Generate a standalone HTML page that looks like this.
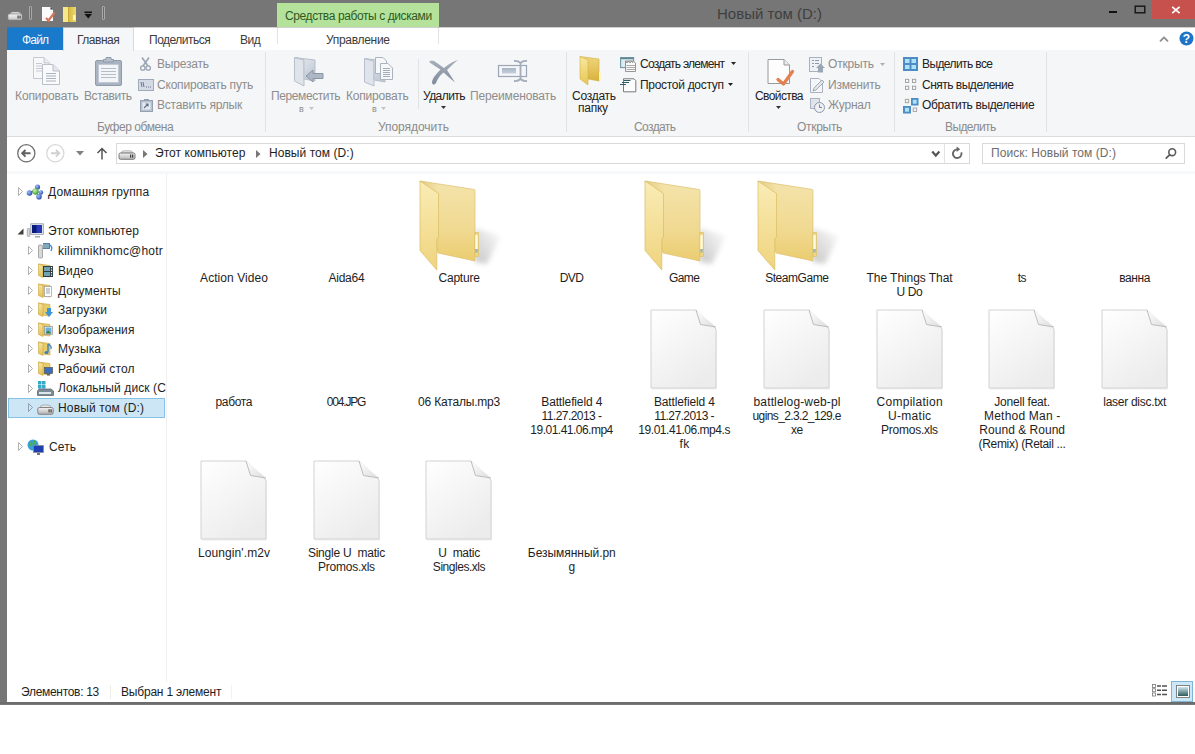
<!DOCTYPE html>
<html><head><meta charset="utf-8">
<style>
*{margin:0;padding:0;box-sizing:border-box}
html,body{width:1195px;height:754px;overflow:hidden;background:#fff}
body{position:relative;font-family:"Liberation Sans",sans-serif;font-size:12px;color:#1e1e1e}
.a{position:absolute;white-space:nowrap}
.t{position:absolute;white-space:nowrap;line-height:14px}
svg{position:absolute;overflow:visible}
#title{left:0;top:0;width:1195px;height:27px;background:#767676}
#lborder{left:0;top:0;width:7px;height:704px;background:#767676}
#bborder{left:0;top:702px;width:1195px;height:3px;background:linear-gradient(#6c6c6c 0,#6c6c6c 2px,#7a7a7a 2px)}
#tabs{left:7px;top:27px;width:1188px;height:23px;background:#fff}
#ribbon{left:7px;top:50px;width:1188px;height:87px;background:#f5f6f7;border-bottom:1px solid #dadbdc}
.sep{position:absolute;top:52px;width:1px;height:80px;background:#e2e3e4}
.lbl{color:#8b8b8b}
.dis{color:#8d8d8d}
.ct{width:120px;text-align:center;color:#1e1e1e}
.grp{position:absolute;top:120px;color:#8b8b8b;white-space:nowrap;font-size:12px;line-height:14px}
</style></head><body>
<div id="title" class="a"></div>
<div id="lborder" class="a"></div>
<div id="tabs" class="a"></div>
<div id="ribbon" class="a"></div>
<div id="bborder" class="a"></div>
<!-- title bar quick access -->
<svg style="left:7px;top:11px" width="16" height="10" viewBox="0 0 16 10">
 <defs><linearGradient id="drv" x1="0" y1="0" x2="0" y2="1"><stop offset="0" stop-color="#f6f6f6"/><stop offset="1" stop-color="#c4c4c4"/></linearGradient></defs>
 <path d="M3,3 Q3.5,1 6,1 H11 Q13.5,1 14,3 Z" fill="#e8e8e8" stroke="#9a9a9a" stroke-width="0.6"/>
 <rect x="1" y="3" width="14" height="6" rx="1" fill="url(#drv)" stroke="#8a8a8a" stroke-width="0.7"/>
 <rect x="10.5" y="4.5" width="1.2" height="3" fill="#444"/><rect x="12.5" y="4.5" width="1.2" height="3" fill="#444"/>
</svg>
<div class="a" style="left:29px;top:6px;width:3px;height:14px;border:1px solid #a9a9a9;border-radius:1px;background:#6a6a6a"></div>
<svg style="left:41px;top:6px" width="15" height="16" viewBox="0 0 15 16">
 <path d="M1,1 H9.5 L12,3.5 V15 H1 Z" fill="#fbfbfb"/>
 <path d="M9.5,1 L12,3.5 H9.5 Z" fill="#333"/>
 <path d="M5,12 L7.5,14.5 L13.5,6.5" fill="none" stroke="#d8755a" stroke-width="2.2"/>
</svg>
<svg style="left:62px;top:6px" width="15" height="16" viewBox="0 0 15 16">
 <defs><linearGradient id="qf" x1="0" y1="0" x2="1" y2="0"><stop offset="0" stop-color="#f3e27a"/><stop offset="0.5" stop-color="#d8bf45"/><stop offset="1" stop-color="#ecd870"/></linearGradient></defs>
 <rect x="1" y="1" width="13" height="15" fill="url(#qf)"/>
 <rect x="1" y="1" width="5" height="15" fill="#f6e88a"/>
 <path d="M6.5,1 V16" stroke="#c9a83a" stroke-width="1"/>
 <rect x="11" y="9" width="2.5" height="5" fill="#fff6b8"/>
</svg>
<svg style="left:84px;top:11px" width="9" height="9" viewBox="0 0 9 9">
 <rect x="0.5" y="0.5" width="7.5" height="1.6" fill="#111"/>
 <path d="M0.5,3 H8 L4.25,7.5 Z" fill="#111"/>
</svg>
<div class="a" style="left:102px;top:6px;width:3px;height:14px;border:1px solid #a9a9a9;border-radius:1px;background:#6a6a6a"></div>
<!-- contextual tab -->
<div class="a" style="left:277px;top:3px;width:162px;height:24px;background:#b5e29b"></div>
<div class="a" style="left:277px;top:27px;width:1px;height:17px;background:#e4e4e4"></div>
<div class="a" style="left:438px;top:27px;width:1px;height:17px;background:#e4e4e4"></div>
<div class="a" style="left:285px;top:9px;color:#2d5a22;font-size:12px;line-height:14px;letter-spacing:-0.4px">Средства работы с дисками</div>
<!-- window title -->
<div class="a" style="left:717px;top:5px;color:#3f3f3f;font-size:15px;line-height:17px">Новый том (D:)</div>
<!-- window controls -->
<div class="a" style="left:1109px;top:11px;width:8px;height:2px;background:#111"></div>
<svg style="left:1134px;top:5px" width="12" height="9" viewBox="0 0 12 9"><rect x="1.2" y="1.2" width="9.6" height="6.6" fill="none" stroke="#151515" stroke-width="1.4"/></svg>
<div class="a" style="left:1152px;top:0;width:43px;height:19px;background:#c7514c"></div>
<svg style="left:1171px;top:6px" width="10" height="8" viewBox="0 0 10 8"><path d="M1.2,0.8 L8.6,7.2 M8.6,0.8 L1.2,7.2" stroke="#fff" stroke-width="1.7"/></svg>
<!-- tabs -->
<div class="a" style="left:7px;top:27px;width:56px;height:23px;background:#1979ca"></div>
<div class="a" style="left:22px;top:33px;color:#f4faff;font-size:12px;line-height:14px;letter-spacing:-0.8px">Файл</div>
<div class="a" style="left:63px;top:27px;width:71px;height:24px;background:#f5f6f7;border-left:1px solid #dadbdc;border-right:1px solid #dadbdc;border-top:1px solid #dadbdc"></div>
<div class="a" style="left:77px;top:33px;font-size:12px;line-height:14px;color:#3b3b3b;letter-spacing:-0.5px">Главная</div>
<div class="a" style="left:149px;top:33px;font-size:12px;line-height:14px;color:#3b3b3b;letter-spacing:-0.5px">Поделиться</div>
<div class="a" style="left:240px;top:33px;font-size:12px;line-height:14px;color:#3b3b3b;letter-spacing:-0.5px">Вид</div>
<div class="a" style="left:326px;top:33px;font-size:12px;line-height:14px;color:#3b3b3b;letter-spacing:-0.3px">Управление</div>
<div class="a" style="left:0;top:27px;width:1195px;height:1px;background:rgba(118,118,118,0.35)"></div>
<!-- ribbon collapse + help -->
<svg style="left:1159px;top:35px" width="10" height="7" viewBox="0 0 10 7"><path d="M1.5,5.8 L5,2.3 L8.5,5.8" fill="none" stroke="#8f8f8f" stroke-width="1.8" stroke-linejoin="round" stroke-linecap="round"/></svg>
<svg style="left:1179px;top:31px" width="15" height="15" viewBox="0 0 15 15"><circle cx="7.5" cy="7.5" r="7" fill="#1e74c6"/><text x="7.5" y="12" font-family="Liberation Sans" font-weight="bold" font-size="12" fill="#fff" text-anchor="middle">?</text></svg>

<!-- ribbon separators -->
<div class="sep" style="left:265px"></div>
<div class="sep" style="left:418px;top:59px;height:50px"></div>
<div class="sep" style="left:566px"></div>
<div class="sep" style="left:748px"></div>
<div class="sep" style="left:894px"></div>
<div class="sep" style="left:1046px"></div>
<!-- group 1 -->
<svg style="left:33px;top:57px" width="28" height="28" viewBox="0 0 28 28">
 <path d="M0.5,0.5 H11 L16.5,6 V21.5 H0.5 Z" fill="#f7f8fa" stroke="#c4cad3"/>
 <path d="M11,0.5 V6 H16.5" fill="#e6e9ee" stroke="#c4cad3"/>
 <path d="M9.5,7.5 H20 L26.5,14 V27.5 H9.5 Z" fill="#f9fafb" stroke="#b9c0ca"/>
 <path d="M20,7.5 V14 H26.5" fill="#e3e7ec" stroke="#b9c0ca"/>
 <path d="M13,16.5 H23 M13,19 H23 M13,21.5 H23 M13,24 H23" stroke="#a9b2be" stroke-width="1"/>
 <path d="M3,6.5 H9 M3,9 H9 M3,11.5 H9 M3,14 H9" stroke="#c3cad3" stroke-width="1"/>
</svg>
<div class="t dis" style="left:15px;top:89px;letter-spacing:-0.1px">Копировать</div>
<svg style="left:95px;top:57px" width="27" height="29" viewBox="0 0 27 29">
 <rect x="0.5" y="3.5" width="26" height="25" rx="1.5" fill="#a9b3c2" stroke="#8f9aab"/>
 <rect x="3.5" y="7.5" width="20" height="18" fill="#f3f5f8" stroke="#c2c9d3"/>
 <path d="M6,11.5 H21 M6,14.5 H21 M6,17.5 H21 M6,20.5 H21" stroke="#b5bdc8"/>
 <path d="M8.5,5 V2.5 H11 V0.5 H16 V2.5 H18.5 V5 Z" fill="#b8c0cc" stroke="#8f9aab"/>
</svg>
<div class="t dis" style="left:84px;top:89px;letter-spacing:-0.4px">Вставить</div>
<svg style="left:140px;top:57px" width="11" height="14" viewBox="0 0 11 14">
 <path d="M2,0.5 L8,9 M9,0.5 L3,9" stroke="#9aa4b2" stroke-width="1.6"/>
 <circle cx="2.8" cy="11" r="2.2" fill="none" stroke="#9aa4b2" stroke-width="1.3"/>
 <circle cx="8.2" cy="11" r="2.2" fill="none" stroke="#9aa4b2" stroke-width="1.3"/>
</svg>
<div class="t dis" style="left:157px;top:57px;letter-spacing:-0.2px">Вырезать</div>
<svg style="left:138px;top:79px" width="16" height="12" viewBox="0 0 16 12">
 <rect x="0.5" y="0.5" width="15" height="11" fill="#d4dbe6" stroke="#9ea9b9"/>
 <path d="M3,3 L4,8 M5,3 L6,8 M8,8 H9 M10,8 H11 M12,8 H13" stroke="#5d6b80" stroke-width="0.9"/>
</svg>
<div class="t dis" style="left:157px;top:78px;letter-spacing:-0.2px">Скопировать путь</div>
<svg style="left:140px;top:99px" width="13" height="13" viewBox="0 0 13 13">
 <rect x="0.5" y="1.5" width="12" height="11" fill="#b8c1ce" stroke="#95a0b0"/>
 <rect x="2.5" y="3.5" width="8" height="7" fill="#e8ecf2"/>
 <path d="M4,9 L8,5 M5.5,5 H8 V7.5" stroke="#5c6f8c" stroke-width="1.2" fill="none"/>
 <rect x="4" y="0" width="5" height="2" fill="#95a0b0"/>
</svg>
<div class="t dis" style="left:157px;top:98px;letter-spacing:-0.2px">Вставить ярлык</div>
<div class="grp" style="left:97px;letter-spacing:-0.45px">Буфер обмена</div>
<!-- group 2 -->
<svg style="left:294px;top:57px" width="31" height="30" viewBox="0 0 31 30">
 <defs><linearGradient id="gf" x1="0" y1="0" x2="1" y2="1"><stop offset="0" stop-color="#eef1f5"/><stop offset="1" stop-color="#b9c2cf"/></linearGradient></defs>
 <path d="M0.5,0.5 L10,3 V29 L0.5,24 Z" fill="#dfe4ea" stroke="#b8c0cb"/>
 <path d="M0.5,0.5 L21,3 V24 L10,22 V3 Z" fill="url(#gf)" stroke="#b8c0cb"/>
 <path d="M12,19 L19,13 V16.5 H29 V21.5 H19 V25 Z" fill="#aeb7c4" stroke="#8a95a5"/>
</svg>
<div class="t dis" style="left:271px;top:89px;letter-spacing:-0.4px">Переместить</div>
<div class="t dis" style="left:299px;top:102px;font-size:9px">в</div>
<svg style="left:309px;top:107px" width="5" height="3"><path d="M0,0 H5 L2.5,3 Z" fill="#c4c4c4"/></svg>
<svg style="left:364px;top:57px" width="31" height="30" viewBox="0 0 31 30">
 <path d="M0.5,1.5 L10,4 V29 L0.5,25 Z" fill="#dfe4ea" stroke="#b8c0cb"/>
 <path d="M0.5,1.5 L21,4 V25 L10,23 V4 Z" fill="url(#gf)" stroke="#b8c0cb"/>
 <path d="M11.5,0.5 H19 L22.5,4 V16.5 H11.5 Z" fill="#f6f7f9" stroke="#aab3bf"/>
 <path d="M16.5,6.5 H24 L28.5,11 V22.5 H16.5 Z" fill="#f6f7f9" stroke="#aab3bf"/>
 <path d="M19,11.5 H26 M19,13.5 H26 M19,15.5 H26 M19,17.5 H26 M19,19.5 H26" stroke="#a3acb9"/>
</svg>
<div class="t dis" style="left:346px;top:89px;letter-spacing:-0.2px">Копировать</div>
<div class="t dis" style="left:372px;top:102px;font-size:9px">в</div>
<svg style="left:381px;top:107px" width="5" height="3"><path d="M0,0 H5 L2.5,3 Z" fill="#c4c4c4"/></svg>
<svg style="left:426px;top:57px" width="36" height="30" viewBox="0 0 36 30">
 <defs><linearGradient id="xg" x1="0" y1="0" x2="0" y2="1"><stop offset="0" stop-color="#a7b0bd"/><stop offset="1" stop-color="#7f8a9b"/></linearGradient></defs>
 <path d="M3,5 Q5,2.5 8,4 Q14,8 18,11 Q25,5 32,3 Q28,6 21,13 Q25,19 29,25.5 Q26,23 17.5,15.5 Q12,20 10,26 Q8,28.5 6.5,27 Q5,25 8,20 Q11,16 14.5,12.5 Q8,8.5 3,5 Z" fill="url(#xg)"/>
</svg>
<div class="t" style="left:423px;top:89px;color:#222;letter-spacing:-0.55px">Удалить</div>
<svg style="left:441px;top:106px" width="5" height="3"><path d="M0,0 H5 L2.5,3 Z" fill="#333"/></svg>
<svg style="left:497px;top:59px" width="32" height="25" viewBox="0 0 32 25">
 <defs><linearGradient id="rg" x1="0" y1="0" x2="0" y2="1"><stop offset="0" stop-color="#aab6c6"/><stop offset="1" stop-color="#c5cfdc"/></linearGradient></defs>
 <rect x="1.5" y="6.5" width="28" height="11" fill="#f4f6f9" stroke="#9ca6b4" stroke-width="1.2"/>
 <rect x="5" y="9" width="14" height="5.5" fill="url(#rg)"/>
 <path d="M17,2 Q21,1.5 23.5,4 Q26,1.5 30,2 M23.5,4 V20 M17,22 Q21,22.5 23.5,20 Q26,22.5 30,22" fill="none" stroke="#a3acb9" stroke-width="1.8"/>
</svg>
<div class="t dis" style="left:470px;top:89px;letter-spacing:-0.15px">Переименовать</div>
<div class="grp" style="left:378px;letter-spacing:-0.05px">Упорядочить</div>
<!-- group 3 -->
<svg style="left:579px;top:56px" width="26" height="30" viewBox="0 0 26 30">
 <defs>
  <linearGradient id="nf1" x1="0" y1="0" x2="0" y2="1"><stop offset="0" stop-color="#f7e7a0"/><stop offset="1" stop-color="#e7c653"/></linearGradient>
  <linearGradient id="nf2" x1="0" y1="0" x2="0" y2="1"><stop offset="0" stop-color="#efd67c"/><stop offset="1" stop-color="#d9b23d"/></linearGradient>
 </defs>
 <path d="M1,0.5 L20,3 V25 L9,23 Z" fill="url(#nf2)" stroke="#d2ac3c" stroke-width="0.6"/>
 <path d="M1,0.5 L9,4 V29 L1,23 Z" fill="url(#nf1)" stroke="#d6b348" stroke-width="0.6"/>
 <rect x="20" y="16" width="2" height="8" fill="#fff6c8"/>
</svg>
<div class="t" style="left:572px;top:89px;color:#222;letter-spacing:-0.25px">Создать</div>
<div class="t" style="left:578px;top:101px;color:#222;letter-spacing:-0.25px">папку</div>
<svg style="left:620px;top:57px" width="17" height="16" viewBox="0 0 17 16">
 <rect x="0.6" y="0.6" width="13" height="10" fill="#dcebf0" stroke="#6f98a6" stroke-width="1.1"/>
 <rect x="0.6" y="0.6" width="13" height="1.6" fill="#5d8795"/>
 <path d="M5.5,4 H13 L15.5,6 V14.5 H5.5 Z" fill="#fafafa" stroke="#8a8a8a" stroke-width="0.9"/>
 <path d="M5.5,4 L7,6 L8.5,4 L10,6 L11.5,4 L13,6" fill="none" stroke="#777" stroke-width="0.8"/>
 <path d="M6.5,8.5 H15 M6.5,10.5 H15 M6.5,12.5 H15" stroke="#a0a0a0" stroke-width="0.9"/>
</svg>
<div class="t" style="left:640px;top:57px;color:#222;letter-spacing:-0.75px">Создать элемент</div>
<svg style="left:731px;top:62px" width="5" height="3"><path d="M0,0 H5 L2.5,3 Z" fill="#222"/></svg>
<svg style="left:620px;top:78px" width="17" height="15" viewBox="0 0 17 15">
 <path d="M3.5,0.8 H14 L15.8,2.6 V13.8 H3.5 Z" fill="#fcfcfc" stroke="#7a7a7a" stroke-width="1"/>
 <path d="M4,2.5 H10.5 M2,4.5 H9 M0,6.5 H6" stroke="#2f5f6a" stroke-width="1.1"/>
</svg>
<div class="t" style="left:640px;top:78px;color:#222;letter-spacing:-0.3px">Простой доступ</div>
<svg style="left:728px;top:83px" width="5" height="3"><path d="M0,0 H5 L2.5,3 Z" fill="#222"/></svg>
<div class="grp" style="left:634px;letter-spacing:-0.6px">Создать</div>
<!-- group 4 -->
<svg style="left:767px;top:58px" width="29" height="28" viewBox="0 0 29 28">
 <path d="M1,1.5 H17 L22.5,7 V25.5 H1 Z" fill="#fdfdfd" stroke="#9a9a9a" stroke-width="1"/>
 <path d="M17,1.5 V7 H22.5" fill="#ececec" stroke="#9a9a9a" stroke-width="1"/>
 <path d="M11,21.5 L16.5,26 L25.5,13.5" fill="none" stroke="#e2804f" stroke-width="3.3" stroke-linecap="round" stroke-linejoin="round"/>
</svg>
<div class="t" style="left:755px;top:89px;color:#222;letter-spacing:-0.6px">Свойства</div>
<svg style="left:776px;top:106px" width="5" height="3"><path d="M0,0 H5 L2.5,3 Z" fill="#333"/></svg>
<svg style="left:809px;top:57px" width="17" height="16" viewBox="0 0 17 16">
 <rect x="0.5" y="0.5" width="12" height="14" fill="#eef1f5" stroke="#a7b1bf"/>
 <path d="M3,3.5 H5 M6,3.5 H10 M3,6.5 H5 M6,6.5 H10 M3,9.5 H5" stroke="#8f9bab"/>
 <path d="M9,15.5 V11 H7 L11.5,6.5 L16,11 H14 V15.5 Z" fill="#9aa6b6"/>
</svg>
<div class="t dis" style="left:828px;top:57px;letter-spacing:-0.2px">Открыть</div>
<svg style="left:880px;top:63px" width="5" height="3"><path d="M0,0 H5 L2.5,3 Z" fill="#b0b0b0"/></svg>
<svg style="left:810px;top:78px" width="16" height="15" viewBox="0 0 16 15">
 <path d="M0.5,0.5 H9 L12.5,4 V14.5 H0.5 Z" fill="#f5f6f8" stroke="#a9b2be"/>
 <path d="M3,13 L4,10 L12,2 L14,4 L6,12 Z" fill="#e3e7ec" stroke="#8e99a8" stroke-width="0.8"/>
</svg>
<div class="t dis" style="left:828px;top:78px;letter-spacing:-0.2px">Изменить</div>
<svg style="left:810px;top:98px" width="16" height="15" viewBox="0 0 16 15">
 <rect x="0.5" y="0.5" width="9" height="10" fill="#dfe4ea" stroke="#a9b2be"/>
 <circle cx="9.5" cy="9.5" r="5" fill="#eef1f4" stroke="#8e99a8"/>
 <path d="M9.5,6.5 V9.5 H12" stroke="#7a8698" fill="none"/>
</svg>
<div class="t dis" style="left:828px;top:98px;letter-spacing:-0.2px">Журнал</div>
<div class="grp" style="left:797px;letter-spacing:-0.3px">Открыть</div>
<!-- group 5 -->
<svg style="left:903px;top:57px" width="15" height="14" viewBox="0 0 15 14">
 <rect x="0" y="0" width="15" height="14" fill="#4d8cc4"/>
 <rect x="2" y="2" width="4.5" height="4" fill="#ade2f7"/><rect x="8.5" y="2" width="4.5" height="4" fill="#ade2f7"/>
 <rect x="2" y="8" width="4.5" height="4" fill="#ade2f7"/><rect x="8.5" y="8" width="4.5" height="4" fill="#ade2f7"/>
</svg>
<div class="t" style="left:922px;top:57px;color:#222;letter-spacing:-0.6px">Выделить все</div>
<svg style="left:903px;top:78px" width="15" height="12" viewBox="0 0 15 12">
 <rect x="2.5" y="1.3" width="3.2" height="3.2" fill="none" stroke="#9c9c9c" stroke-width="0.9"/><rect x="9.5" y="1.3" width="3.2" height="3.2" fill="none" stroke="#9c9c9c" stroke-width="0.9"/>
 <rect x="2.5" y="8.2" width="3.2" height="3.2" fill="none" stroke="#9c9c9c" stroke-width="0.9"/><rect x="9.5" y="8.2" width="3.2" height="3.2" fill="none" stroke="#9c9c9c" stroke-width="0.9"/>
</svg>
<div class="t" style="left:922px;top:78px;color:#222;letter-spacing:-0.5px">Снять выделение</div>
<svg style="left:903px;top:97px" width="16" height="17" viewBox="0 0 16 17">
 <rect x="2.3" y="2.3" width="3.4" height="3.4" fill="#f4f0d8" stroke="#a0a0a0" stroke-width="0.9"/>
 <rect x="8" y="1" width="7.5" height="7.5" fill="#4d8cc4"/><rect x="9.8" y="2.8" width="3.9" height="3.9" fill="#ade2f7"/>
 <rect x="0" y="9" width="8" height="7.5" fill="#4d8cc4"/><rect x="2" y="10.8" width="4" height="3.9" fill="#ade2f7"/>
 <rect x="10.2" y="11" width="3.4" height="3.4" fill="none" stroke="#a0a0a0" stroke-width="0.9"/>
</svg>
<div class="t" style="left:922px;top:98px;color:#222;letter-spacing:-0.35px">Обратить выделение</div>
<div class="grp" style="left:945px;letter-spacing:-0.6px">Выделить</div>

<!-- address row -->
<svg style="left:16px;top:144px" width="20" height="19" viewBox="0 0 20 19">
 <circle cx="10.3" cy="9.3" r="8.6" fill="none" stroke="#707070" stroke-width="1.3"/>
 <path d="M6.2,9.3 H14.5 M9.5,6 L6.2,9.3 L9.5,12.6" fill="none" stroke="#606060" stroke-width="1.9"/>
</svg>
<svg style="left:45px;top:144px" width="20" height="19" viewBox="0 0 20 19">
 <circle cx="10.3" cy="9.3" r="8.6" fill="none" stroke="#d8d8d8" stroke-width="1.3"/>
 <path d="M6,9.3 H14.3 M11,6 L14.3,9.3 L11,12.6" fill="none" stroke="#d0d0d0" stroke-width="1.9"/>
</svg>
<svg style="left:76px;top:151px" width="8" height="5"><path d="M0,0 H8 L4,4.5 Z" fill="#808080"/></svg>
<svg style="left:96px;top:147px" width="12" height="13" viewBox="0 0 12 13">
 <path d="M6,12.5 V1.5 M1.5,6 L6,1.5 L10.5,6" fill="none" stroke="#555" stroke-width="1.5"/>
</svg>
<div class="a" style="left:116px;top:143px;width:854px;height:21px;border:1px solid #d9d9d9;background:#fff"></div>
<div class="a" style="left:944px;top:144px;width:1px;height:19px;background:#e3e3e3"></div>
<svg style="left:118px;top:150px" width="18" height="10" viewBox="0 0 18 10">
 <defs><linearGradient id="hd" x1="0" y1="0" x2="0" y2="1"><stop offset="0" stop-color="#f2f2f2"/><stop offset="1" stop-color="#b8b8b8"/></linearGradient></defs>
 <path d="M3,3 Q3.5,0.8 6,0.8 H12 Q14.5,0.8 15,3 Z" fill="#e6e6e6" stroke="#a0a0a0" stroke-width="0.7"/>
 <rect x="1" y="3" width="16" height="6.3" rx="1.5" fill="url(#hd)" stroke="#6e6e6e" stroke-width="0.9"/>
 <rect x="12" y="4.5" width="1.3" height="3.2" fill="#444"/><rect x="14" y="4.5" width="1.3" height="3.2" fill="#444"/>
</svg>
<svg style="left:143px;top:150px" width="5" height="8"><path d="M0,0 L4.5,4 L0,8 Z" fill="#777"/></svg>
<div class="t" style="left:155px;top:146px;color:#1e1e1e;letter-spacing:0.05px">Этот компьютер</div>
<svg style="left:256px;top:150px" width="5" height="8"><path d="M0,0 L4.5,4 L0,8 Z" fill="#777"/></svg>
<div class="t" style="left:269px;top:146px;color:#1e1e1e;letter-spacing:0.05px">Новый том (D:)</div>
<svg style="left:931px;top:150px" width="10" height="8" viewBox="0 0 10 8"><path d="M1.2,1.5 L4.8,5.5 L8.4,1.5" fill="none" stroke="#555" stroke-width="2.2"/></svg>
<svg style="left:950px;top:146px" width="14" height="14" viewBox="0 0 14 14">
 <path d="M7.2,3.4 A4.3,4.3 0 1 0 11.3,6.4" fill="none" stroke="#666" stroke-width="1.9"/>
 <path d="M6.6,0.6 L10.2,3.3 L6.6,6 Z" fill="#666"/>
</svg>
<div class="a" style="left:982px;top:143px;width:203px;height:21px;border:1px solid #d9d9d9;background:#fff"></div>
<div class="t" style="left:991px;top:146px;color:#6d6d6d;letter-spacing:0.05px">Поиск: Новый том (D:)</div>
<svg style="left:1165px;top:147px" width="13" height="13" viewBox="0 0 13 13">
 <circle cx="7.2" cy="5.2" r="3.4" fill="none" stroke="#5a5a5a" stroke-width="1.6"/>
 <path d="M4.8,7.6 L1.2,11.2" stroke="#5a5a5a" stroke-width="1.7" stroke-linecap="round"/>
</svg>
<!-- strip below address -->
<div class="a" style="left:7px;top:171px;width:1188px;height:3px;background:#f7f8f9"></div>
<!-- nav pane border -->
<div class="a" style="left:166px;top:174px;width:1px;height:508px;background:#f0f0f0"></div>
<!-- nav pane items -->
<svg class="exp" style="left:18px;top:187px" width="5" height="9"><path d="M0.5,0.5 L4.5,4.5 L0.5,8.5 Z" fill="none" stroke="#a6a6a6" stroke-width="0.9"/></svg>
<svg style="left:26px;top:184px" width="18" height="16" viewBox="0 0 18 16">
 <defs>
  <radialGradient id="hb" cx="0.35" cy="0.35" r="0.7"><stop offset="0" stop-color="#9fc0ff"/><stop offset="1" stop-color="#2a4aa8"/></radialGradient>
  <radialGradient id="hgr" cx="0.35" cy="0.35" r="0.7"><stop offset="0" stop-color="#c8f5a8"/><stop offset="1" stop-color="#3a9a3a"/></radialGradient>
 </defs>
 <path d="M3.5,9 L9.5,7.5 L11.5,3 M9.5,7.5 L15,8.5 M9.5,7.5 L13,12.5" stroke="#7aa0d0" stroke-width="1"/>
 <circle cx="3.5" cy="9" r="2.8" fill="url(#hb)"/>
 <circle cx="11.5" cy="3" r="2.6" fill="url(#hb)"/>
 <circle cx="15" cy="8.5" r="2.2" fill="url(#hb)"/>
 <circle cx="13" cy="12.8" r="2.8" fill="url(#hb)"/>
 <circle cx="9.5" cy="7.5" r="3.2" fill="url(#hgr)"/>
</svg>
<div class="t" style="left:48px;top:185px;letter-spacing:0.15px">Домашняя группа</div>
<svg style="left:17px;top:228px" width="7" height="7"><path d="M6.5,0.5 V6.5 H0.5 Z" fill="#404040"/></svg>
<svg style="left:27px;top:223px" width="17" height="15" viewBox="0 0 17 15">
 <rect x="0.3" y="5.5" width="2.6" height="8" rx="0.8" fill="#d8d8d8" stroke="#8a8a8a" stroke-width="0.6"/>
 <rect x="3.8" y="0.8" width="12.5" height="10.5" fill="#e6e8ee" stroke="#8e96a8" stroke-width="0.8"/>
 <rect x="5" y="2" width="10" height="8" fill="#2438b8"/>
 <rect x="5" y="2" width="4.5" height="8" fill="#0a1a78"/>
 <path d="M8,13.8 H13" stroke="#9aa0aa" stroke-width="1.4"/>
</svg>
<div class="t" style="left:48px;top:224px;letter-spacing:0.1px">Этот компьютер</div>
<svg style="left:28px;top:246px" width="5" height="9"><path d="M0.5,0.5 L4.5,4.5 L0.5,8.5 Z" fill="none" stroke="#a6a6a6" stroke-width="0.9"/></svg>
<svg style="left:38px;top:242px" width="16" height="17" viewBox="0 0 16 17">
 <rect x="0.5" y="3" width="4" height="13" rx="1" fill="#d8d8d8" stroke="#8c8c8c" stroke-width="0.7"/>
 <rect x="5" y="1" width="7" height="6" fill="#5b7ba0"/>
 <path d="M6,2 V6 M8,2 V6 M10,2 V6" stroke="#cfe" stroke-width="0.7"/>
 <path d="M12,3 Q15,5 13,9" fill="none" stroke="#3a8ad6" stroke-width="1.3"/>
</svg>
<div class="t" style="left:58px;top:244px;letter-spacing:0.2px">kilimnikhomc@hotr</div>

<svg width="0" height="0" style="position:absolute">
 <defs>
  <linearGradient id="sf" x1="0" y1="0" x2="0" y2="1"><stop offset="0" stop-color="#f6e59e"/><stop offset="1" stop-color="#e2bf55"/></linearGradient>
  <symbol id="smallfolder" viewBox="0 0 16 15">
   <path d="M0.5,1 L12,2.5 V14 L4,13 Z" fill="#e8cb6a" stroke="#c9a540" stroke-width="0.6"/>
   <path d="M0.5,1 L5,2.5 V14.5 L0.5,12.5 Z" fill="url(#sf)" stroke="#c9a540" stroke-width="0.6"/>
  </symbol>
 </defs>
</svg>
<!-- Видео -->
<svg style="left:28px;top:266px" width="5" height="9"><path d="M0.5,0.5 L4.5,4.5 L0.5,8.5 Z" fill="none" stroke="#a6a6a6" stroke-width="0.9"/></svg>
<svg style="left:38px;top:263px" width="16" height="15"><use href="#smallfolder"/><rect x="5" y="3" width="10" height="11" fill="#2e3d44"/><rect x="6" y="4" width="6" height="9" fill="#6fa3b3"/><path d="M6,8.5 H12" stroke="#2e3d44" stroke-width="1"/><path d="M13.5,4 V13.5" stroke="#fff" stroke-width="1.2" stroke-dasharray="1.2 1.3"/></svg>
<div class="t" style="left:58px;top:264px;letter-spacing:0.1px">Видео</div>
<!-- Документы -->
<svg style="left:28px;top:286px" width="5" height="9"><path d="M0.5,0.5 L4.5,4.5 L0.5,8.5 Z" fill="none" stroke="#a6a6a6" stroke-width="0.9"/></svg>
<svg style="left:38px;top:283px" width="16" height="15"><use href="#smallfolder"/><rect x="6.5" y="3.5" width="7" height="10" fill="#fff" stroke="#9a9a9a" stroke-width="0.7"/><path d="M8,6 H12 M8,8 H12 M8,10 H12" stroke="#7a8a9a" stroke-width="0.8"/></svg>
<div class="t" style="left:58px;top:284px;letter-spacing:0.1px">Документы</div>
<!-- Загрузки -->
<svg style="left:28px;top:305px" width="5" height="9"><path d="M0.5,0.5 L4.5,4.5 L0.5,8.5 Z" fill="none" stroke="#a6a6a6" stroke-width="0.9"/></svg>
<svg style="left:38px;top:302px" width="16" height="16"><use href="#smallfolder" width="16" height="15"/><path d="M9,6 H13 V10 H15 L11,15 L7,10 H9 Z" fill="#3b95d9"/></svg>
<div class="t" style="left:58px;top:303px;letter-spacing:0.1px">Загрузки</div>
<!-- Изображения -->
<svg style="left:28px;top:325px" width="5" height="9"><path d="M0.5,0.5 L4.5,4.5 L0.5,8.5 Z" fill="none" stroke="#a6a6a6" stroke-width="0.9"/></svg>
<svg style="left:38px;top:322px" width="16" height="15"><use href="#smallfolder"/><rect x="6.5" y="4.5" width="8" height="8" fill="#fff" stroke="#8a8a8a" stroke-width="0.7"/><rect x="7.5" y="5.5" width="6" height="6" fill="#6fb0d8"/><path d="M7.5,11.5 L10,8.5 L13.5,11.5 Z" fill="#3d7a3a"/></svg>
<div class="t" style="left:58px;top:323px;letter-spacing:0.1px">Изображения</div>
<!-- Музыка -->
<svg style="left:28px;top:344px" width="5" height="9"><path d="M0.5,0.5 L4.5,4.5 L0.5,8.5 Z" fill="none" stroke="#a6a6a6" stroke-width="0.9"/></svg>
<svg style="left:38px;top:341px" width="16" height="15"><use href="#smallfolder"/><path d="M10,3 V11" stroke="#3a7fc0" stroke-width="1.4"/><ellipse cx="8.5" cy="11.5" rx="2" ry="1.5" fill="#3a7fc0"/><path d="M10,3 Q14,5 13,8" fill="none" stroke="#3a7fc0" stroke-width="1.2"/></svg>
<div class="t" style="left:58px;top:342px;letter-spacing:0.1px">Музыка</div>
<!-- Рабочий стол -->
<svg style="left:28px;top:364px" width="5" height="9"><path d="M0.5,0.5 L4.5,4.5 L0.5,8.5 Z" fill="none" stroke="#a6a6a6" stroke-width="0.9"/></svg>
<svg style="left:38px;top:361px" width="16" height="15"><use href="#smallfolder"/><rect x="6.5" y="6.5" width="8" height="6" fill="#3a6fc0" stroke="#555" stroke-width="0.7"/><rect x="9" y="13" width="3" height="1.5" fill="#666"/></svg>
<div class="t" style="left:58px;top:362px;letter-spacing:0.1px">Рабочий стол</div>
<!-- Локальный диск -->
<svg style="left:28px;top:384px" width="5" height="9"><path d="M0.5,0.5 L4.5,4.5 L0.5,8.5 Z" fill="none" stroke="#a6a6a6" stroke-width="0.9"/></svg>
<svg style="left:37px;top:381px" width="17" height="15" viewBox="0 0 17 15">
 <rect x="1" y="0" width="3.5" height="3.5" fill="#36a9c9"/><rect x="5" y="0" width="3.5" height="3.5" fill="#36a9c9"/>
 <rect x="1" y="4" width="3.5" height="3.5" fill="#36a9c9"/><rect x="5" y="4" width="3.5" height="3.5" fill="#36a9c9"/>
 <path d="M0.5,10 L2,8 H14 L16.5,10 V14.5 H0.5 Z" fill="#7a8a96" stroke="#55606a" stroke-width="0.7"/>
 <rect x="2" y="11" width="12" height="2" fill="#dfe6ea"/>
</svg>
<div class="t" style="left:58px;top:381px;letter-spacing:0.1px">Локальный диск (C</div>
<!-- Новый том selected -->
<div class="a" style="left:8px;top:398px;width:157px;height:20px;background:#cde6f6;border:1px solid #84c2e6"></div>
<svg style="left:28px;top:403px" width="5" height="9"><path d="M0.5,0.5 L4.5,4.5 L0.5,8.5 Z" fill="none" stroke="#8a9aa6" stroke-width="0.9"/></svg>
<svg style="left:37px;top:404px" width="17" height="11" viewBox="0 0 17 11">
 <defs><linearGradient id="hd2" x1="0" y1="0" x2="0" y2="1"><stop offset="0" stop-color="#f4f4f4"/><stop offset="1" stop-color="#b0b0b0"/></linearGradient></defs>
 <path d="M3,3.5 Q3.5,1 6,1 H11 Q13.5,1 14,3.5 Z" fill="#e4e4e4" stroke="#9a9a9a" stroke-width="0.7"/>
 <rect x="0.8" y="3.5" width="15.4" height="6.8" rx="1.5" fill="url(#hd2)" stroke="#707070" stroke-width="0.8"/>
 <rect x="11.5" y="5.2" width="1.2" height="3.2" fill="#444"/><rect x="13.5" y="5.2" width="1.2" height="3.2" fill="#444"/>
</svg>
<div class="t" style="left:58px;top:401px;letter-spacing:0.15px">Новый том (D:)</div>
<!-- Сеть -->
<svg style="left:18px;top:442px" width="5" height="9"><path d="M0.5,0.5 L4.5,4.5 L0.5,8.5 Z" fill="none" stroke="#a6a6a6" stroke-width="0.9"/></svg>
<svg style="left:27px;top:439px" width="17" height="16" viewBox="0 0 17 16">
 <circle cx="6" cy="6" r="5.5" fill="#3aa0d8"/><path d="M2,4 Q5,2 6,5 Q4,8 2,7 Z M7,1 Q10,3 9,6 L7,5 Z" fill="#4cb050"/>
 <rect x="6.5" y="6.5" width="10" height="7" fill="#1f40b0" stroke="#889" stroke-width="0.7"/>
 <rect x="10" y="14" width="3" height="2" fill="#777"/>
</svg>
<div class="t" style="left:49px;top:440px;letter-spacing:0.1px">Сеть</div>

<!-- status bar -->
<div class="t" style="left:21px;top:685px;color:#1e1e1e;letter-spacing:-0.3px">Элементов: 13</div>
<div class="a" style="left:110px;top:685px;width:1px;height:14px;background:#ededed"></div>
<div class="t" style="left:121px;top:685px;color:#1e1e1e;letter-spacing:-0.2px">Выбран 1 элемент</div>
<div class="a" style="left:231px;top:685px;width:1px;height:14px;background:#f2f2f2"></div>
<svg style="left:1152px;top:684px" width="16" height="13" viewBox="0 0 16 13">
 <rect x="0.5" y="0.5" width="3" height="3" fill="#fff" stroke="#777" stroke-width="0.8"/>
 <rect x="0.5" y="4.75" width="3" height="3" fill="#fff" stroke="#777" stroke-width="0.8"/>
 <rect x="0.5" y="9" width="3" height="3" fill="#fff" stroke="#777" stroke-width="0.8"/>
 <path d="M5,2 H9 M10,2 H15 M5,6.25 H9 M10,6.25 H15 M5,10.5 H9 M10,10.5 H15" stroke="#505050" stroke-width="1.3"/>
</svg>
<div class="a" style="left:1171px;top:681px;width:22px;height:21px;background:#cce8f8;border:1px solid #7eb4d6"></div>
<svg style="left:1176px;top:685px" width="14" height="13" viewBox="0 0 14 13">
 <defs><linearGradient id="pic" x1="0" y1="0" x2="0" y2="1"><stop offset="0" stop-color="#cfe6ef"/><stop offset="1" stop-color="#2c5a5a"/></linearGradient></defs>
 <rect x="0.5" y="0.5" width="13" height="12" fill="#fff" stroke="#777" stroke-width="0.9"/>
 <rect x="2" y="2" width="10" height="9" fill="url(#pic)"/>
</svg>

<!--CONTENT-->
<svg width="0" height="0" style="position:absolute">
 <defs>
  <linearGradient id="dg" x1="0" y1="0" x2="0.6" y2="1"><stop offset="0" stop-color="#ffffff"/><stop offset="1" stop-color="#ececec"/></linearGradient>
  <linearGradient id="dfold" x1="0" y1="0" x2="1" y2="1"><stop offset="0" stop-color="#ffffff"/><stop offset="1" stop-color="#dcdcdc"/></linearGradient>
  <symbol id="doc" viewBox="0 0 68 81">
   <path d="M1.5,1.5 H46 L66.5,21 V80 H1.5 Z" fill="#000" opacity="0.05" transform="translate(0.5,0.8)"/>
   <path d="M1,1 H46 L66,20 V79 H1 Z" fill="url(#dg)" stroke="#d2d2d2" stroke-width="1"/>
   <path d="M46,1 L50.5,15.5 L66,18" fill="url(#dfold)" stroke="#bdbdbd" stroke-width="1" stroke-linejoin="round"/>
  </symbol>
  <linearGradient id="fback" x1="0" y1="0" x2="0" y2="1"><stop offset="0" stop-color="#f4e4ab"/><stop offset="0.6" stop-color="#f0d992"/><stop offset="1" stop-color="#ebcd70"/></linearGradient>
  <linearGradient id="fshade" x1="0" y1="0" x2="1" y2="0"><stop offset="0" stop-color="#c9a440" stop-opacity="0.35"/><stop offset="0.35" stop-color="#c9a440" stop-opacity="0"/></linearGradient>
  <linearGradient id="fflap" x1="0" y1="0" x2="0" y2="1"><stop offset="0" stop-color="#f9ecb6"/><stop offset="0.5" stop-color="#f5e09a"/><stop offset="1" stop-color="#efd47f"/></linearGradient>
  <radialGradient id="fsh" cx="0.2" cy="0.6" r="0.8"><stop offset="0" stop-color="#000" stop-opacity="0.22"/><stop offset="1" stop-color="#000" stop-opacity="0"/></radialGradient>
  <linearGradient id="shg" x1="0" y1="1" x2="1" y2="0"><stop offset="0" stop-color="#000" stop-opacity="0.22"/><stop offset="0.55" stop-color="#000" stop-opacity="0.1"/><stop offset="1" stop-color="#000" stop-opacity="0"/></linearGradient>
  <filter id="blur3" x="-50%" y="-50%" width="200%" height="200%"><feGaussianBlur stdDeviation="2.5"/></filter>
  <filter id="blur4" x="-50%" y="-50%" width="200%" height="200%"><feGaussianBlur stdDeviation="3.5"/></filter>
  <symbol id="folder" viewBox="0 0 96 96">
   <path d="M58,50 L84,58 L70,86 L58,84 Z" fill="url(#shg)" filter="url(#blur3)"/>
   <path d="M3,3 L57.5,11.5 Q58,12 58,13 V83 L21,75 Z" fill="url(#fback)" stroke="#dcc070" stroke-width="0.7"/>
   <path d="M3,3 L57.5,11.5 Q58,12 58,13 V83 L21,75 Z" fill="url(#fshade)"/>
   <rect x="58" y="54.5" width="3.5" height="24" fill="#f1d67e" stroke="#d8bd62" stroke-width="0.6"/>
   <rect x="58.3" y="57" width="2.4" height="14" fill="#fffbe0"/>
   <rect x="58.3" y="71" width="2.4" height="3.5" fill="#9fb5b5"/>
   <path d="M3,3 L21.5,15.5 V59 L19.8,61 V92 L3,72.5 Z" fill="url(#fflap)" stroke="#d9bd62" stroke-width="0.7"/>
  </symbol>
 </defs>
</svg>
<div class="t ct" style="left:174.0px;top:271px;letter-spacing:0.06px;text-indent:0.06px">Action Video</div>
<div class="t ct" style="left:286.6px;top:271px;letter-spacing:-0.28px;text-indent:-0.28px">Aida64</div>
<svg style="left:417.2px;top:178px" width="96" height="96"><use href="#folder"/></svg>
<div class="t ct" style="left:399.2px;top:271px;letter-spacing:-0.22px;text-indent:-0.22px">Capture</div>
<div class="t ct" style="left:511.8px;top:271px;letter-spacing:-0.50px;text-indent:-0.50px">DVD</div>
<svg style="left:642.4px;top:178px" width="96" height="96"><use href="#folder"/></svg>
<div class="t ct" style="left:624.4px;top:271px;letter-spacing:-0.56px;text-indent:-0.56px">Game</div>
<svg style="left:755.0px;top:178px" width="96" height="96"><use href="#folder"/></svg>
<div class="t ct" style="left:737.0px;top:271px;letter-spacing:-0.46px;text-indent:-0.46px">SteamGame</div>
<div class="t ct" style="left:849.6px;top:271px;letter-spacing:-0.07px;text-indent:-0.07px">The Things That</div>
<div class="t ct" style="left:849.6px;top:285px;letter-spacing:-0.45px;text-indent:-0.45px">U Do</div>
<div class="t ct" style="left:962.2px;top:271px;letter-spacing:-0.50px;text-indent:-0.50px">ts</div>
<div class="t ct" style="left:1074.8px;top:271px;letter-spacing:-0.39px;text-indent:-0.39px">ванна</div>
<div class="t ct" style="left:174.0px;top:395px;letter-spacing:-0.33px;text-indent:-0.33px">работа</div>
<div class="t ct" style="left:286.6px;top:395px;letter-spacing:-1.20px;text-indent:-1.20px">004.JPG</div>
<div class="t ct" style="left:399.2px;top:395px;letter-spacing:-0.19px;text-indent:-0.19px">06 Каталы.mp3</div>
<div class="t ct" style="left:511.8px;top:395px;letter-spacing:-0.14px;text-indent:-0.14px">Battlefield 4</div>
<div class="t ct" style="left:511.8px;top:409px;letter-spacing:-0.55px;text-indent:-0.55px">11.27.2013 -</div>
<div class="t ct" style="left:511.8px;top:423px;letter-spacing:-0.51px;text-indent:-0.51px">19.01.41.06.mp4</div>
<svg style="left:650.4px;top:308.5px" width="68" height="81"><use href="#doc"/></svg>
<div class="t ct" style="left:624.4px;top:395px;letter-spacing:-0.14px;text-indent:-0.14px">Battlefield 4</div>
<div class="t ct" style="left:624.4px;top:409px;letter-spacing:-0.55px;text-indent:-0.55px">11.27.2013 -</div>
<div class="t ct" style="left:624.4px;top:423px;letter-spacing:-0.46px;text-indent:-0.46px">19.01.41.06.mp4.s</div>
<div class="t ct" style="left:624.4px;top:437px;letter-spacing:0.26px;text-indent:0.26px">fk</div>
<svg style="left:763.0px;top:308.5px" width="68" height="81"><use href="#doc"/></svg>
<div class="t ct" style="left:737.0px;top:395px;letter-spacing:0.15px;text-indent:0.15px">battlelog-web-pl</div>
<div class="t ct" style="left:737.0px;top:409px;letter-spacing:-0.61px;text-indent:-0.61px">ugins_2.3.2_129.e</div>
<div class="t ct" style="left:737.0px;top:423px;letter-spacing:-0.50px;text-indent:-0.50px">xe</div>
<svg style="left:875.6px;top:308.5px" width="68" height="81"><use href="#doc"/></svg>
<div class="t ct" style="left:849.6px;top:395px;letter-spacing:0.26px;text-indent:0.26px">Compilation</div>
<div class="t ct" style="left:849.6px;top:409px;letter-spacing:0.28px;text-indent:0.28px">U-matic</div>
<div class="t ct" style="left:849.6px;top:423px;letter-spacing:-0.26px;text-indent:-0.26px">Promos.xls</div>
<svg style="left:988.2px;top:308.5px" width="68" height="81"><use href="#doc"/></svg>
<div class="t ct" style="left:962.2px;top:395px;letter-spacing:-0.21px;text-indent:-0.21px">Jonell feat.</div>
<div class="t ct" style="left:962.2px;top:409px;letter-spacing:0.21px;text-indent:0.21px">Method Man -</div>
<div class="t ct" style="left:962.2px;top:423px;letter-spacing:0.02px;text-indent:0.02px">Round &amp; Round</div>
<div class="t ct" style="left:962.2px;top:437px;letter-spacing:-0.34px;text-indent:-0.34px">(Remix) (Retail ...</div>
<svg style="left:1100.8px;top:308.5px" width="68" height="81"><use href="#doc"/></svg>
<div class="t ct" style="left:1074.8px;top:395px;letter-spacing:-0.28px;text-indent:-0.28px">laser disc.txt</div>
<svg style="left:200.0px;top:460.0px" width="68" height="81"><use href="#doc"/></svg>
<div class="t ct" style="left:174.0px;top:546px;letter-spacing:0.11px;text-indent:0.11px">Loungin'.m2v</div>
<svg style="left:312.6px;top:460.0px" width="68" height="81"><use href="#doc"/></svg>
<div class="t ct" style="left:286.6px;top:546px;letter-spacing:-0.24px;text-indent:-0.24px">Single U&nbsp;&nbsp;matic</div>
<div class="t ct" style="left:286.6px;top:560px;letter-spacing:-0.26px;text-indent:-0.26px">Promos.xls</div>
<svg style="left:425.2px;top:460.0px" width="68" height="81"><use href="#doc"/></svg>
<div class="t ct" style="left:399.2px;top:546px;letter-spacing:-0.29px;text-indent:-0.29px">U&nbsp;&nbsp;matic</div>
<div class="t ct" style="left:399.2px;top:560px;letter-spacing:-0.47px;text-indent:-0.47px">Singles.xls</div>
<div class="t ct" style="left:511.8px;top:546px;letter-spacing:-0.04px;text-indent:-0.04px">Безымянный.pn</div>
<div class="t ct" style="left:511.8px;top:560px;letter-spacing:-0.50px;text-indent:-0.50px">g</div>
<!--/CONTENT-->
</body></html>
